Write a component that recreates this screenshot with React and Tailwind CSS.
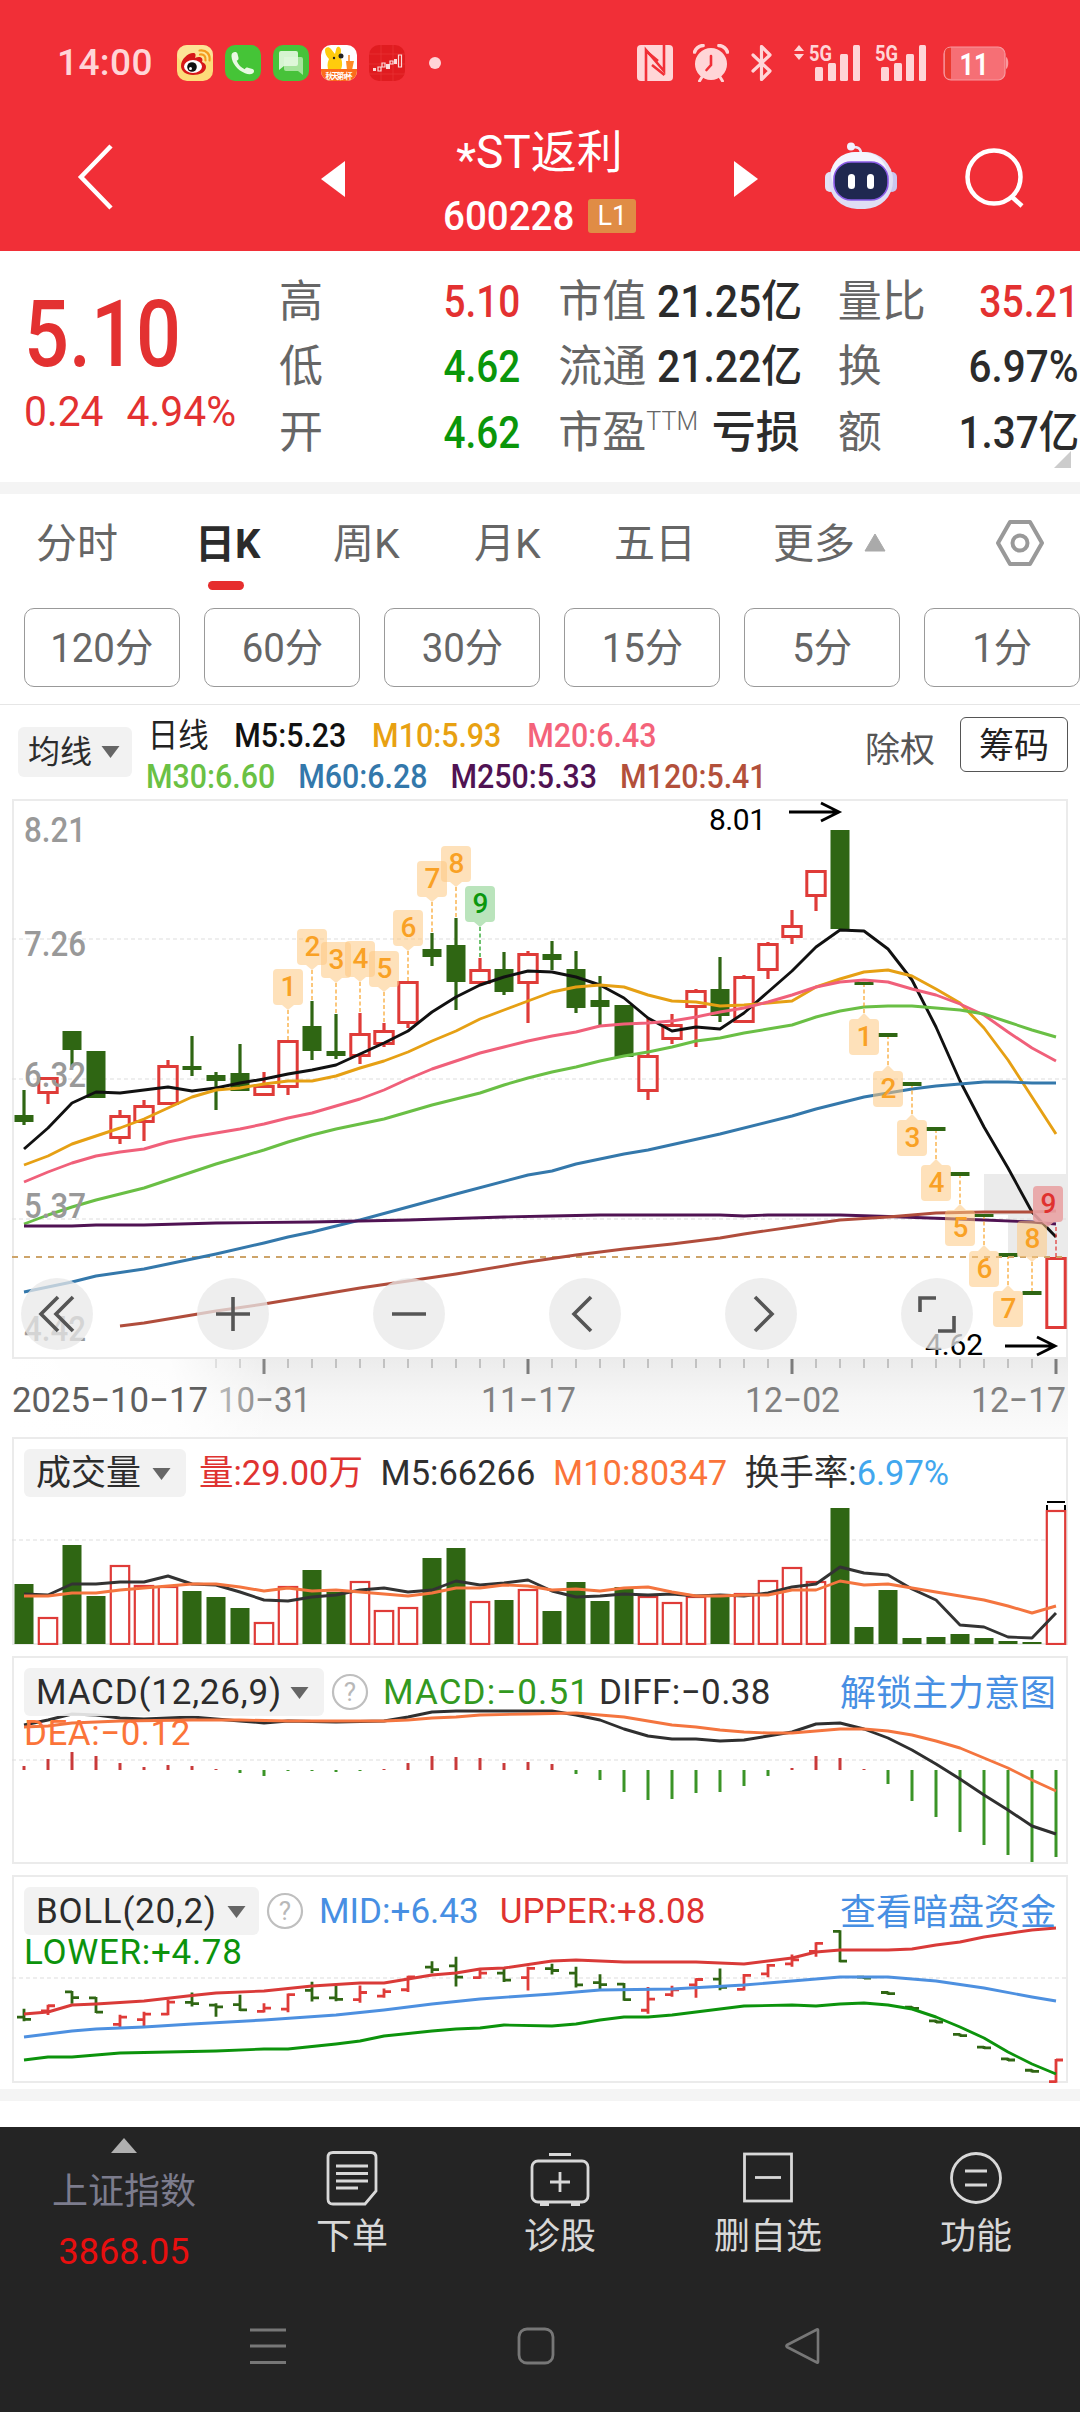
import React from 'react'

const GREEN = '#2f6613'
const RED = '#df3b38'

const xAt = (i) => 24 + i * 24

// [kind, high, body top, body bottom, low] in chart pixels, 24px per trading day
const CANDLES = [
    ['g', 1090, 1115, 1122, 1125], ['r', 1077, 1077, 1094, 1104], ['g', 1031, 1031, 1050, 1067], ['g', 1051, 1051, 1098, 1098],
    ['r', 1110, 1115, 1139, 1144], ['r', 1100, 1105, 1123, 1141], ['r', 1060, 1065, 1105, 1105], ['g', 1036, 1066, 1070, 1076],
    ['g', 1072, 1075, 1081, 1110], ['g', 1044, 1073, 1091, 1091], ['r', 1072, 1085, 1096, 1096], ['r', 1040, 1040, 1088, 1095],
    ['g', 1001, 1026, 1051, 1060], ['g', 1014, 1051, 1056, 1059], ['r', 1013, 1033, 1057, 1064], ['r', 1023, 1030, 1045, 1047],
    ['r', 981, 981, 1024, 1028], ['g', 933, 949, 957, 966], ['g', 918, 945, 982, 1010], ['r', 958, 969, 984, 984],
    ['g', 952, 969, 992, 995], ['r', 951, 953, 984, 1023], ['g', 941, 954, 960, 970], ['g', 951, 969, 1008, 1013],
    ['g', 976, 1000, 1007, 1025], ['g', 1005, 1005, 1057, 1057], ['r', 1018, 1055, 1092, 1100], ['r', 1014, 1024, 1040, 1044],
    ['r', 989, 990, 1008, 1047], ['g', 957, 989, 1016, 1022], ['r', 975, 976, 1023, 1023], ['r', 942, 943, 971, 979],
    ['r', 910, 925, 938, 944], ['r', 870, 870, 897, 911], ['g', 830, 830, 929, 929], ['g', 982, 982, 985, 985],
    ['g', 1033, 1033, 1037, 1037], ['g', 1082, 1082, 1086, 1086], ['g', 1127, 1127, 1131, 1131], ['g', 1172, 1172, 1176, 1176],
    ['g', 1214, 1214, 1217, 1217], ['g', 1253, 1253, 1257, 1257], ['g', 1291, 1291, 1295, 1295], ['r', 1257, 1257, 1329, 1329],
]

const M5 = [1149, 1128, 1103, 1092, 1093, 1090, 1087, 1091, 1088, 1083, 1079, 1074, 1070, 1065, 1054, 1043, 1031, 1012, 997, 985, 977, 971, 972, 977, 985, 998, 1018, 1031, 1027, 1029, 1013, 992, 971, 947, 930, 931, 949, 980, 1027, 1081, 1127, 1168, 1212, 1237]
const M10 = [1165, 1156, 1144, 1136, 1128, 1119, 1108, 1097, 1090, 1088, 1084, 1081, 1081, 1076, 1068, 1061, 1052, 1041, 1031, 1019, 1010, 1001, 992, 987, 985, 987, 995, 1001, 1002, 1006, 1005, 1003, 1001, 987, 979, 972, 970, 976, 989, 1003, 1028, 1060, 1097, 1134]
const M20 = [1182, 1172, 1163, 1156, 1152, 1149, 1142, 1137, 1133, 1129, 1124, 1118, 1113, 1106, 1099, 1090, 1079, 1069, 1061, 1053, 1047, 1041, 1036, 1032, 1026, 1024, 1023, 1021, 1017, 1012, 1008, 1002, 995, 987, 982, 980, 982, 989, 995, 1004, 1015, 1032, 1048, 1061]
const M30 = [1224, 1215, 1207, 1200, 1194, 1188, 1180, 1172, 1164, 1157, 1150, 1142, 1135, 1129, 1124, 1119, 1112, 1105, 1099, 1093, 1085, 1078, 1072, 1067, 1061, 1056, 1052, 1047, 1041, 1038, 1033, 1029, 1025, 1017, 1011, 1007, 1006, 1006, 1008, 1010, 1014, 1022, 1030, 1037]
// sparse lines keep [day, y] pairs
const M60 = [[0, 1292], [1, 1287], [2, 1282], [3, 1276], [5, 1269], [8, 1254], [10, 1243], [11, 1237], [12, 1232], [14, 1220], [18, 1194], [21, 1175], [22, 1171], [23, 1164], [25, 1154], [26, 1150], [29, 1134], [32, 1116], [33, 1109], [35, 1097], [36, 1093], [37, 1089], [38, 1086], [39, 1084], [40, 1082], [41, 1082], [42, 1083], [43, 1083]]
const M250 = [[0, 1226], [2, 1226], [3, 1225], [5, 1225], [8, 1223], [12, 1222], [16, 1220], [20, 1217], [22, 1216], [24, 1215], [29, 1215], [30, 1216], [31, 1215], [34, 1215], [36, 1216.5], [40, 1220], [42, 1222], [43, 1224]]
const M120 = [[4, 1326], [5, 1323], [8, 1311], [10, 1304], [14, 1288], [18, 1274], [21, 1262], [23, 1255], [25, 1249], [27, 1244], [29, 1238], [30, 1234], [32, 1227], [34, 1220], [36, 1217], [38, 1213], [40, 1212], [42, 1212], [43, 1211]]

// nine-turn markers: box top plus where the dotted stem meets the candle
const TAGS_UP = [
    [11, 969, 1040, 1], [12, 929, 1001, 2], [13, 942, 1014, 3], [14, 941, 1013, 4], [15, 951, 1023, 5],
    [16, 910, 981, 6], [17, 861, 933, 7], [18, 846, 918, 8], [19, 886, 958, 9], [42, 1221, 1291, 8], [43, 1186, 1257, 9],
]
const TAGS_DOWN = [[35, 1019, 985, 1], [36, 1071, 1037, 2], [37, 1120, 1086, 3], [38, 1165, 1131, 4], [39, 1210, 1176, 5], [40, 1251, 1217, 6], [41, 1291, 1257, 7]]

const VOLUME = [1584, 1617, 1545, 1596, 1565, 1585, 1586, 1591, 1597, 1608, 1622, 1586, 1570, 1592, 1581, 1610, 1607, 1558, 1548, 1601, 1600, 1589, 1611, 1582, 1601, 1587, 1596, 1602, 1596, 1597, 1593, 1580, 1567, 1581, 1508, 1627, 1590, 1638, 1637, 1634, 1638, 1641, 1642, 1510]
const VOL_M5 = [1594, 1595, 1584, 1584, 1582, 1582, 1576, 1584, 1585, 1592, 1600, 1601, 1597, 1595, 1590, 1588, 1592, 1590, 1581, 1585, 1583, 1580, 1591, 1597, 1596, 1594, 1595, 1594, 1596, 1595, 1596, 1593, 1587, 1584, 1567, 1573, 1575, 1589, 1600, 1625, 1627, 1637, 1638, 1613]
const VOL_M10 = [1596, 1596, 1593, 1593, 1590, 1588, 1586, 1584, 1584, 1587, 1591, 1588, 1591, 1590, 1592, 1594, 1596, 1593, 1588, 1588, 1585, 1586, 1590, 1589, 1591, 1588, 1587, 1592, 1596, 1596, 1595, 1595, 1590, 1590, 1581, 1585, 1584, 1588, 1592, 1596, 1600, 1606, 1613, 1606]

const MACD = [1766, 1759, 1752, 1756, 1763, 1767, 1765, 1766, 1769, 1773, 1776, 1771, 1771, 1772, 1771, 1769, 1763, 1756, 1757, 1758, 1763, 1762, 1764, 1774, 1780, 1792, 1800, 1799, 1793, 1792, 1786, 1776, 1768, 1756, 1758, 1769, 1784, 1801, 1817, 1832, 1845, 1855, 1862, 1857]
const DIFF = [[0, 1725], [1, 1720], [2, 1714], [3, 1715], [4, 1718], [5, 1719], [6, 1718], [7, 1717], [8, 1719], [9, 1721], [10, 1723], [11, 1721], [13, 1722], [15, 1721], [16, 1717], [17, 1712], [18, 1711], [22, 1711], [23, 1715], [24, 1720], [25, 1729], [26, 1736], [27, 1739], [28, 1739], [29, 1741], [30, 1740], [31, 1736], [32, 1732], [33, 1724], [34, 1723], [35, 1729], [36, 1738], [37, 1750], [38, 1764], [39, 1779], [40, 1795], [41, 1810], [42, 1826], [43, 1834]]
const DEA = [[0, 1727], [1, 1726], [2, 1723], [3, 1722], [4, 1721], [7, 1720], [9, 1720], [11, 1721], [15, 1721], [16, 1720], [17, 1718], [18, 1717], [19, 1715], [21, 1714], [23, 1713], [24, 1715], [25, 1717], [26, 1721], [27, 1725], [28, 1727], [29, 1730], [30, 1732], [31, 1733], [32, 1733], [33, 1731], [34, 1729], [35, 1729], [36, 1731], [37, 1735], [38, 1741], [39, 1748], [40, 1758], [41, 1768], [42, 1780], [43, 1791]]

const UPPER = [[0, 2014], [1, 2012], [2, 2005], [3, 2004], [5, 2001], [7, 1995.5], [8, 1993], [10, 1991], [12, 1986], [14, 1983], [15, 1983], [16, 1979], [17, 1975], [18, 1973], [19, 1969], [20, 1968], [22, 1961], [23, 1960], [24, 1961], [25, 1962], [28, 1962], [30, 1964], [32, 1958], [33, 1952], [34, 1950], [36, 1950], [37, 1949], [38, 1945], [39, 1942], [40, 1937], [42, 1930], [43, 1928]]
const MID = [[0, 2037], [1, 2034], [2, 2031], [3, 2029], [5, 2027], [7, 2024], [10, 2020], [13, 2015], [15, 2010], [17, 2004], [19, 1999], [22, 1994], [24, 1990], [27, 1989], [30, 1985], [32, 1981], [33, 1979], [34, 1977], [36, 1977], [38, 1981], [40, 1988], [42, 1997], [43, 2001]]
const LOWER = [[0, 2060], [1, 2057], [2, 2057], [3, 2055], [4, 2053], [8, 2051], [10, 2049], [11, 2049], [13, 2044], [14, 2041], [15, 2036], [17, 2031], [18, 2029], [19, 2028], [20, 2025], [22, 2026], [23, 2024], [24, 2020], [25, 2017], [26, 2017], [27, 2015], [29, 2009], [30, 2006], [32, 2005], [33, 2006], [34, 2004], [35, 2003], [36, 2005], [37, 2009], [38, 2017], [39, 2027], [40, 2038], [41, 2052], [42, 2064], [43, 2074]]

function Line({ data, color, width = 2.9 }) {
    const points = data
        .map((d, i) => (Array.isArray(d) ? `${xAt(d[0])},${d[1]}` : `${xAt(i)},${d}`))
        .join(' ')
    return <polyline points={points} fill="none" stroke={color} strokeWidth={width} strokeLinejoin="round" />
}

function Grid({ y }) {
    return <line x1="12" x2="1066" y1={y} y2={y} stroke="#dedede" strokeWidth="1.2" strokeDasharray="4 3" />
}

function Candle({ i, c }) {
    const [kind, high, top, bottom, low] = c
    const x = xAt(i)
    const color = kind === 'g' ? GREEN : RED
    return (
        <g>
            {high < top && <line x1={x} x2={x} y1={high} y2={top} stroke={color} strokeWidth="3.2" />}
            {low > bottom && <line x1={x} x2={x} y1={bottom} y2={low} stroke={color} strokeWidth="3.2" />}
            {kind === 'g' ? (
                <rect x={x - 9.5} y={top} width="19" height={bottom - top} fill={color} />
            ) : (
                <rect x={x - 9.2} y={top + 1.5} width="18.4" height={bottom - top - 3} fill="none" stroke={color} strokeWidth="3" />
            )}
        </g>
    )
}

function tagColors(i) {
    if (i === 19) return { bg: '#b3e1b5', fg: '#0b970e' }
    if (i === 43) return { bg: '#e9a3a4', fg: '#e0312f' }
    return { bg: '#fdc981', fg: '#f9a125' }
}

function Tag({ i, top, stem, n, down }) {
    const stemX = xAt(i)
    // the last marker is pushed left so that it stays inside the frame
    const x = Math.min(stemX, 1048)
    const { bg, fg } = tagColors(i)
    const tip = down ? top - 6 : top + 41
    return (
        <g>
            <line x1={stemX} x2={stemX} y1={tip} y2={stem} stroke={fg} strokeOpacity="0.6" strokeWidth="2" strokeDasharray="4 2.5" />
            <g fill={bg} fillOpacity={i === 19 || i === 43 ? 0.9 : 0.55}>
                <path d={down
                    ? `M${x - 11} ${top}h5l6-6 6 6h5a4 4 0 0 1 4 4v28a4 4 0 0 1-4 4h-22a4 4 0 0 1-4-4v-28a4 4 0 0 1 4-4z`
                    : `M${x - 11} ${top}h22a4 4 0 0 1 4 4v28a4 4 0 0 1-4 4h-5l-6 5-6-5h-5a4 4 0 0 1-4-4v-28a4 4 0 0 1 4-4z`} />
            </g>
            <text x={x + 0.5} y={top + 27} textAnchor="middle" fontSize="28" fontWeight="500" fill={fg}>{n}</text>
        </g>
    )
}

function Arrow({ x, y }) {
    return <path d={`M${x} ${y}h50m-18-9l18 9-18 9`} fill="none" stroke="#000" strokeWidth="2.8" />
}

function Caret({ className = 'text-[#666]' }) {
    return (
        <svg className={className} width="19" height="12" viewBox="0 0 19 12">
            <path d="M0.5 0h18L9.5 12z" fill="currentColor" />
        </svg>
    )
}

function Pill({ children, className }) {
    return (
        <div className={`flex shrink-0 items-center justify-between rounded-md bg-[#f1f1f1]/90 text-[#2c2c2c] ${className}`}>
            {children}
            <Caret />
        </div>
    )
}

function Help() {
    return (
        <svg width="38" height="38" viewBox="0 0 38 38" className="ml-[7px] shrink-0">
            <circle cx="19" cy="19" r="17" fill="#fff" stroke="#bfbfbf" strokeWidth="2.2" />
            <text x="19" y="28" textAnchor="middle" fontSize="26" fill="#b8b8b8">?</text>
        </svg>
    )
}

function SignalBars({ arrows }) {
    return (
        <svg className="overflow-visible" width="66" height="40" viewBox="0 0 66 40" fill="#ffd5d7">
            {arrows && <path d="M0 8l5-6 5 6zM0 11h10l-5 6z" />}
            <text x="15" y="17.500" fontSize="22.500" fontWeight="700" textLength="23" lengthAdjust="spacingAndGlyphs">5G</text>
            <rect x="21" y="24" width="8" height="14" rx="1.500" />
            <rect x="34" y="20" width="8" height="18" rx="1.500" />
            <rect x="46" y="11" width="8" height="27" rx="1.500" />
            <rect x="59" y="2" width="7" height="36" rx="1.500" />
        </svg>
    )
}

function StatusBar() {
    return (
        <div className="flex h-[126px] items-center pl-[57px]">
            <span className="w-[120px] text-[37px] font-medium tracking-[0.4px] text-[#ffd5d7]">14:00</span>
            <div className="flex gap-3">
                <svg width="36" height="36" viewBox="0 0 36 36">
                    <rect width="36" height="36" rx="10" fill="#fddb7a" />
                    <rect width="36" height="18" rx="10" fill="#fde9a8" opacity="0.6" />
                    <path d="M4 21C4 14 11 8 16 8c3 0 3 2 2 5 4-2 9-1 7 4 3 1 4 3 4 5 0 5-6 8-13 8S4 26 4 21z" fill="#d71718" />
                    <ellipse cx="16" cy="21.500" rx="9" ry="6.500" fill="#fff" />
                    <circle cx="15" cy="22" r="4.800" fill="#111" />
                    <circle cx="13.500" cy="23.500" r="1.500" fill="#fff" />
                    <path d="M23 9.500c4-.5 6 2 5.500 6M22.500 5.500c7-1 11 4 10 10" fill="none" stroke="#f49b1d" strokeWidth="2.200" strokeLinecap="round" />
                </svg>
                <svg width="36" height="36" viewBox="0 0 36 36">
                    <rect width="36" height="36" rx="10" fill="#45c437" />
                    <path d="M7.500 8c2-1.600 4.500-1 5 .8l1 4c.3 1.500-.5 2.500-1.800 3 1.500 4 4.500 7 8 8.500.8-1.500 2-2 3.300-1.600l4.500 1.200c2 .6 2 3 .5 4.300-2 1.500-5 1.200-8 0C12 25 7 18 6.500 11.500c0-1.500 0-2.700 1-3.500z" fill="#e8f9e2" />
                </svg>
                <svg width="36" height="36" viewBox="0 0 36 36">
                    <rect width="36" height="36" rx="10" fill="#47c23a" />
                    <path d="M11 12h17q2 0 2 2v16l-5-4H13q-2 0-2-2z" fill="#a5e49b" />
                    <path d="M8 6h15q2 0 2 2v11q0 2-2 2H11l-5 4V8q0-2 2-2z" fill="#e3f8de" opacity="0.92" />
                </svg>
                <svg width="36" height="36" viewBox="0 0 36 36">
                    <defs><clipPath id="app"><rect width="36" height="36" rx="10" /></clipPath></defs>
                    <g clipPath="url(#app)">
                        <rect width="36" height="36" fill="#fff" />
                        <path d="M4 5c0-3 4-4 6-1l4 5c1-3 1-8 4-7s2 6 1 10c3 3 3 12-1 15H8c-2-5-2-9 0-13C5 11 4 8 4 5z" fill="#ffcb0d" />
                        <circle cx="20" cy="11" r="2.500" fill="#222" />
                        <circle cx="13" cy="13" r="1.200" fill="#222" />
                        <path d="M25 16h8l-2 9h-5z" fill="#ff8a24" />
                        <path d="M28 10v6" stroke="#ff8a24" strokeWidth="1.500" />
                        <rect y="24" width="36" height="12" fill="#fb6d1b" />
                        <text x="18" y="33.500" textAnchor="middle" fontSize="7.500" fontWeight="700" fill="#fff" textLength="27">秋天第1杯</text>
                    </g>
                </svg>
                <svg width="36" height="36" viewBox="0 0 36 36">
                    <rect width="36" height="36" rx="10" fill="#e01c20" />
                    <path d="M0 9h36M0 19h36M0 29h36M12 0v36M24 0v36" stroke="#e83438" strokeWidth="0.700" />
                    <g fill="#fbdcdc"><rect x="4" y="23" width="3" height="3" /><rect x="17" y="19" width="4" height="5" /><rect x="25" y="14" width="3" height="5" /></g>
                    <path d="M9 22h3v4H9zM13 18h3v4h-3zM21 16h3v3h-3zM29.500 10h3v12h-3z" fill="none" stroke="#fbdcdc" strokeWidth="1.200" />
                </svg>
            </div>
            <div className="ml-6 size-3 rounded-full bg-[#ffd5d7]" />
            <div className="ml-auto flex items-center pr-[71px]">
                <svg width="36" height="36" viewBox="0 0 36 36">
                    <rect width="36" height="36" rx="4" fill="#ffd5d7" />
                    <path d="M9 36V5l18 21V0" fill="none" stroke="#f12f37" strokeWidth="2.600" />
                    <path d="M9 6l12 10M27.500 30L15 20" fill="none" stroke="#f12f37" strokeWidth="2.600" />
                </svg>
                <svg className="ml-5" width="36" height="38" viewBox="0 0 36 38">
                    <circle cx="18" cy="20" r="16" fill="#ffd5d7" />
                    <path d="M1.500 8C3 4 6 2 10 1.500M34.500 8C33 4 30 2 26 1.500" stroke="#ffd5d7" strokeWidth="3.600" fill="none" strokeLinecap="round" />
                    <path d="M9 33l-2.500 4M27 33l2.500 4" stroke="#ffd5d7" strokeWidth="3" strokeLinecap="round" />
                    <path d="M18 12v9l-4.500 5" fill="none" stroke="#f12f37" strokeWidth="2.600" strokeLinecap="round" />
                </svg>
                <svg className="ml-[22px]" width="22" height="36" viewBox="0 0 22 36">
                    <path d="M2 10l17 16-8.500 8.500v-33L19 10 2 26" fill="none" stroke="#ffd5d7" strokeWidth="3.200" strokeLinecap="round" strokeLinejoin="round" />
                </svg>
                <div className="ml-[21px]"><SignalBars arrows /></div>
                <SignalBars />
                <svg className="ml-[17px] overflow-visible" width="66" height="36" viewBox="0 0 66 36">
                    <path d="M63 12c3 1 3 11 0 12z" fill="#f99a9e" />
                    <rect x="1" y="2" width="61" height="33" rx="7" fill="#f66f75" stroke="#f79aa0" strokeWidth="1.200" />
                    <path d="M8 2.800h-1q-5 0-5 5v21q0 5 5 5h1z" fill="#ea3a30" />
                    <text x="31" y="29.500" textAnchor="middle" fontSize="31" fontWeight="700" fill="#fff" textLength="29" lengthAdjust="spacingAndGlyphs">11</text>
                </svg>
            </div>
        </div>
    )
}

function Robot() {
    return (
        <svg width="74" height="68" viewBox="0 0 74 68">
            <path d="M37 12c0-6-3-7-9-7" fill="none" stroke="#e9e6fa" strokeWidth="2.600" />
            <circle cx="27" cy="4.500" r="4" fill="#f3f1ff" />
            <rect x="1" y="30" width="10" height="20" rx="5" fill="#e3e2f5" />
            <rect x="63" y="30" width="10" height="20" rx="5" fill="#c9c6ee" />
            <rect x="5" y="10" width="64" height="57" rx="28" fill="#dfdef4" />
            <rect x="7" y="10" width="56" height="44" rx="24" fill="#f5f4fe" />
            <rect x="10" y="20" width="54" height="38" rx="17" fill="#1f2850" stroke="#8b5be6" strokeWidth="1.600" />
            <rect x="24" y="32" width="7" height="15" rx="3.500" fill="#fff" />
            <rect x="43" y="32" width="7" height="15" rx="3.500" fill="#fff" />
        </svg>
    )
}

function TitleBar() {
    return (
        <div className="flex h-[125px] items-start">
            <svg className="ml-[75px] mt-[17px]" width="40" height="68" viewBox="0 0 40 68">
                <path d="M36 3L6 34l30 31" fill="none" stroke="#fff" strokeWidth="4.500" />
            </svg>
            <svg className="ml-[206px] mt-[35px]" width="24" height="36" viewBox="0 0 24 36"><path d="M24 0v36L0 18z" fill="#fff" /></svg>
            <div className="mx-auto flex flex-col items-center text-white">
                <div className="flex text-[46px] leading-[52px]"><span className="relative top-[8px]">*</span>ST返利</div>
                <div className="mt-[14px] flex items-center gap-[14px]">
                    <span className="-mr-2 origin-left scale-x-[0.94] text-[41px] font-medium leading-[48px]">600228</span>
                    <span className="flex h-[34px] w-[48px] items-center justify-center rounded-[3px] bg-[#e08c45] text-[27px]">L1</span>
                </div>
            </div>
            <svg className="mr-[66px] mt-[35px]" width="24" height="36" viewBox="0 0 24 36"><path d="M0 0v36l24-18z" fill="#fff" /></svg>
            <div className="mt-[16px]"><Robot /></div>
            <svg className="ml-[64px] mr-[54px] mt-[20px]" width="64" height="64" viewBox="0 0 64 64" fill="none" stroke="#fff" strokeWidth="4.500">
                <circle cx="32" cy="31" r="26.500" />
                <path d="M49 50l11 10" />
            </svg>
        </div>
    )
}

function Stat({ label, sup, value, color = 'text-[#2b2b2b]', fit = 'scale-x-[0.9]' }) {
    return (
        <div className="flex h-[65.500px] items-center justify-between">
            <span className="flex whitespace-nowrap text-[#666]">
                {label}
                {sup && <sup className="top-0 text-[25px] font-light leading-[44px]">{sup}</sup>}
            </span>
            <span className={`origin-right whitespace-nowrap font-medium ${fit} ${color}`}>{value}</span>
        </div>
    )
}

function Quote() {
    return (
        <section className="relative flex h-[231px]">
            <div className="w-[279px] pl-[24px] text-[#e33131]">
                <div className="mt-[36px] origin-left scale-x-[0.86] text-[92px] font-medium leading-[96px]">5.10</div>
                <div className="mt-[4px] flex origin-left scale-x-[0.96] gap-[24px] text-[42.500px] leading-[50px]">
                    <span>0.24</span>
                    <span>4.94%</span>
                </div>
            </div>
            <div className="mt-[18px] grid w-[800px] grid-cols-3 gap-x-[38px] text-[44px]">
                <div>
                    <Stat label="高" value="5.10" color="text-[#e33131]" fit="scale-x-[0.88]" />
                    <Stat label="低" value="4.62" color="text-[#0a960a]" fit="scale-x-[0.88]" />
                    <Stat label="开" value="4.62" color="text-[#0a960a]" fit="scale-x-[0.88]" />
                </div>
                <div>
                    <Stat label="市值" value="21.25亿" fit="scale-x-[0.93]" />
                    <Stat label="流通" value="21.22亿" fit="scale-x-[0.93]" />
                    <Stat label="市盈" sup="TTM" value="亏损" fit="scale-x-100" />
                </div>
                <div>
                    <Stat label="量比" value="35.21" color="text-[#e33131]" fit="scale-x-[0.89]" />
                    <Stat label="换" value="6.97%" fit="scale-x-[0.92]" />
                    <Stat label="额" value="1.37亿" fit="scale-x-[0.92]" />
                </div>
            </div>
            <svg className="absolute right-[9px] top-[200px]" width="17" height="17" viewBox="0 0 17 17"><path d="M17 0v17H0z" fill="#ccc" /></svg>
        </section>
    )
}

function Tabs() {
    return (
        <nav className="flex h-[114px] pl-[36px] pt-[25px] text-[41px] leading-[50px] text-[#666]">
            <span className="w-[159px]">分时</span>
            <span className="w-[138px]">
                <span className="inline-flex flex-col items-center text-[40px] font-bold text-[#2b2b2b]">
                    日K
                    <i className="mr-[3px] mt-[11px] h-[9px] w-[36px] rounded-full bg-[#e62e2e]" />
                </span>
            </span>
            <span className="w-[141px]">周K</span>
            <span className="w-[140px]">月K</span>
            <span className="w-[159px]">五日</span>
            <span className="flex w-[222px] items-center gap-[9px] self-start">
                更多
                <svg className="-mt-1" width="22" height="19" viewBox="0 0 22 19"><path d="M11 1L21 18H1z" fill="#aaa" stroke="#aaa" strokeLinejoin="round" /></svg>
            </span>
            <svg className="-mt-px" width="50" height="50" viewBox="0 0 50 50" fill="none" stroke="#999" strokeWidth="4" strokeLinejoin="round">
                <path d="M15 4h20l12 21-12 21H15L3 25z" />
                <circle cx="25" cy="25" r="7.500" />
            </svg>
        </nav>
    )
}

function Periods() {
    return (
        <div className="flex h-[97px] gap-6 overflow-hidden border-b border-[#e6e6e6] pl-6">
            {['120分', '60分', '30分', '15分', '5分', '1分'].map((p) => (
                <div key={p} className="flex h-[79px] w-[156px] shrink-0 items-center justify-center rounded-[10px] border-[1.5px] border-[#999] pt-[3px] text-[40px] text-[#666]">
                    <span className="scale-x-[0.96]">{p}</span>
                </div>
            ))}
        </div>
    )
}

function AverageLegend() {
    return (
        <div className="flex h-[94px] text-[33px] font-medium">
            <Pill className="ml-[18px] mt-[22px] h-[50px] w-[114px] pl-[10px] pr-[12px] text-[32px] font-normal">均线</Pill>
            <div className="ml-[14px] mt-[10px] w-[700px] whitespace-nowrap leading-[41px]">
                <div className="flex origin-left scale-x-[0.92] gap-[28px]">
                    <span className="pl-[2px] text-[33px] font-normal text-[#222]">日线</span>
                    <span className="text-[#111]">M5:5.23</span>
                    <span className="text-[#e8a112]">M10:5.93</span>
                    <span className="text-[#f4637a]">M20:6.43</span>
                </div>
                <div className="flex origin-left scale-x-[0.92] gap-[25px]">
                    <span className="text-[#6ac144]">M30:6.60</span>
                    <span className="text-[#3378ab]">M60:6.28</span>
                    <span className="text-[#501353]">M250:5.33</span>
                    <span className="text-[#b3503b]">M120:5.41</span>
                </div>
            </div>
            <div className="ml-auto mr-[12px] flex items-start text-[35px] font-normal">
                <span className="mr-[25px] mt-[21px] leading-[50px] text-[#555]">除权</span>
                <span className="mt-[12px] flex h-[55px] w-[108px] items-center justify-center rounded-md border-[1.5px] border-[#555] pt-[6px] text-[#222]">筹码</span>
            </div>
        </div>
    )
}

const TOOL_ICONS = [
    'M37 19L20 36l17 17M52 19L35 36l17 17',
    'M36 19v34M19 36h34',
    'M19 36h34',
    'M42 19L25 36l17 17',
    'M30 19l17 17-17 17',
    'M19 34V20h16M37 53h16V38',
]

function PriceChart() {
    return (
        <section className="relative mx-3 h-[560px] border-2 border-[#ebebeb]">
            <svg className="absolute -left-0.5 -top-0.5 overflow-visible" width="1056" height="560" viewBox="12 799 1056 560">
                <path d="M984 1174h82v83h-58v-42h-24z" fill="#ebebeb" />
                <Grid y={939} />
                <Grid y={1079} />
                <Grid y={1219} />
                {CANDLES.map((c, i) => <Candle key={i} i={i} c={c} />)}
                <line x1="12" x2="1066" y1="1257" y2="1257" stroke="#cda469" strokeWidth="1.800" strokeDasharray="6 6" />
                <Line data={M5} color="#111" />
                <Line data={M10} color="#e6a014" />
                <Line data={M20} color="#f0607a" />
                <Line data={M30} color="#6abf45" />
                <Line data={M60} color="#3478ab" />
                <Line data={M250} color="#501353" />
                <Line data={M120} color="#b04d3c" />
                {TAGS_UP.map(([i, top, stem, n]) => <Tag key={i} i={i} top={top} stem={stem} n={n} />)}
                {TAGS_DOWN.map(([i, top, stem, n]) => <Tag key={i} i={i} top={top} stem={stem} n={n} down />)}
                <g fontSize="35" fill="#999" fontWeight="500">
                    <text x="24" y="842" textLength="62" lengthAdjust="spacingAndGlyphs">8.21</text>
                    <text x="24" y="956" textLength="62" lengthAdjust="spacingAndGlyphs">7.26</text>
                    <text x="24" y="1087" textLength="62" lengthAdjust="spacingAndGlyphs">6.32</text>
                    <text x="24" y="1218" textLength="62" lengthAdjust="spacingAndGlyphs">5.37</text>
                    <text x="24" y="1341" textLength="62" lengthAdjust="spacingAndGlyphs">4.42</text>
                </g>
                <g fontSize="30" fill="#000">
                    <text x="709" y="830" textLength="57">8.01</text>
                    <text x="925" y="1355" textLength="58">4.62</text>
                </g>
                <Arrow x={789} y={812} />
                <Arrow x={1005} y={1346} />
            </svg>
            <div className="absolute left-[7px] top-[477px] flex gap-[104px]">
                {TOOL_ICONS.map((d) => (
                    <svg key={d} className="size-[72px] rounded-full bg-[#e8e8e8]/75" viewBox="0 0 72 72">
                        <path d={d} fill="none" stroke="#555" strokeWidth="3.600" />
                    </svg>
                ))}
            </div>
        </section>
    )
}

function TimeAxis() {
    return (
        <div className="mx-3 h-[78px] bg-linear-to-b from-[#ececec] via-[#f6f6f6] to-[#fbfbfb]">
            <svg width="1056" height="78" viewBox="12 1359 1056 78">
                <defs>
                    <linearGradient id="fade">
                        <stop offset="0" stopColor="#fff" />
                        <stop offset="0.600" stopColor="#fff" stopOpacity="0.900" />
                        <stop offset="1" stopColor="#fff" stopOpacity="0" />
                    </linearGradient>
                </defs>
                {CANDLES.map((_, i) => {
                    if (i < 8) return null
                    const major = i % 11 === 10
                    return <line key={i} x1={xAt(i)} x2={xAt(i)} y1="1359" y2={major ? 1374 : 1368} stroke={major ? '#7c7c7c' : '#a5a5a5'} strokeWidth={major ? 3 : 1.2} />
                })}
                <g fontSize="35" fill="#818181">
                    <text x="218" y="1412" textLength="93" lengthAdjust="spacingAndGlyphs">10−31</text>
                    <text x="481" y="1412" textLength="95" lengthAdjust="spacingAndGlyphs">11−17</text>
                    <text x="745" y="1412" textLength="95" lengthAdjust="spacingAndGlyphs">12−02</text>
                    <text x="971" y="1412" textLength="95" lengthAdjust="spacingAndGlyphs">12−17</text>
                </g>
                <rect x="12" y="1359" width="260" height="78" fill="url(#fade)" />
                <text x="12" y="1412" fontSize="35" fill="#5f5f5f" textLength="196" lengthAdjust="spacingAndGlyphs">2025−10−17</text>
            </svg>
        </div>
    )
}

function VolumeChart() {
    return (
        <section className="relative mx-3 h-[208px] border-2 border-[#ebebeb]">
            <svg className="absolute -left-0.5 -top-0.5" width="1056" height="208" viewBox="12 1437 1056 208">
                <Grid y={1540} />
                {VOLUME.map((top, i) =>
                    CANDLES[i][0] === 'g' ? (
                        <rect key={i} x={xAt(i) - 9.5} y={top} width="19" height={1644 - top} fill={GREEN} />
                    ) : (
                        <rect key={i} x={xAt(i) - 9.2} y={top + 1} width="18.400" height={1643 - top} fill="#fff" stroke={RED} strokeWidth="2.200" />
                    )
                )}
                <path d="M1047 1510v-5M1065 1510v-5M1047 1502h18" fill="none" stroke="#000" strokeWidth="2" />
                <Line data={VOL_M5} color="#333" />
                <Line data={VOL_M10} color="#f4753f" />
            </svg>
            <div className="relative ml-[10px] mt-[10px] flex h-[48px] items-center whitespace-nowrap text-[35px] text-[#2f2f2f]">
                <Pill className="h-[48px] w-[162px] pl-[12px] pr-[15px] pt-[2px]">成交量</Pill>
                <div className="ml-[13px] mt-[3px] flex origin-left scale-x-[0.985] gap-[18px]">
                    <span className="text-[#df3331]">量:29.00万</span>
                    <span>M5:66266</span>
                    <span className="text-[#fb7439]">M10:80347</span>
                    <span>换手率:<span className="text-[#41a7ee]">6.97%</span></span>
                </div>
            </div>
        </section>
    )
}

function MacdChart() {
    return (
        <section className="relative mx-3 mt-[11px] h-[208px] border-2 border-[#ebebeb]">
            <svg className="absolute -left-0.5 -top-0.5" width="1056" height="208" viewBox="12 1656 1056 208">
                <Grid y={1760} />
                {MACD.map((y, i) => (
                    <line key={i} x1={xAt(i)} x2={xAt(i)} y1="1770" y2={y} stroke={y < 1770 ? '#c93a3a' : '#3b9427'} strokeWidth="3" />
                ))}
                <Line data={DIFF} color="#2f2f2f" />
                <Line data={DEA} color="#f4753f" />
            </svg>
            <div className="relative ml-[10px] mr-[10px] mt-[10px] flex h-[48px] items-center whitespace-nowrap text-[35px] text-[#2f2f2f]">
                <Pill className="h-[48px] w-[300px] pl-[12px] pr-[15px] pt-[2px] tracking-[0.8px]">MACD(12,26,9)</Pill>
                <Help />
                <div className="ml-[14px] mt-[3px] flex gap-[9px] tracking-[1.1px]">
                    <span className="text-[#33991f]">MACD:−0.51</span>
                    <span className="tracking-[0.4px]">DIFF:−0.38</span>
                </div>
                <span className="ml-auto mt-[3px] text-[36px] text-[#478fe3]">解锁主力意图</span>
            </div>
            <div className="relative ml-[10px] mt-px text-[35px] leading-[34px] tracking-[0.5px] text-[#fb7439]">DEA:−0.12</div>
        </section>
    )
}

function BollChart() {
    const scale = (y) => 1931.3 + (y - 830) * 0.3014
    return (
        <section className="relative mx-3 mt-[11px] h-[208px] border-2 border-[#ebebeb]">
            <svg className="absolute -left-0.5 -top-0.5" width="1056" height="208" viewBox="12 1875 1056 208">
                <Grid y={1978} />
                {CANDLES.map(([kind, high, top, bottom, low], i) => {
                    const x = xAt(i)
                    const open = scale(kind === 'g' ? top : bottom)
                    const close = scale(kind === 'g' ? bottom : top)
                    return <path key={i} d={`M${x} ${scale(high) - 1}V${scale(low) + 1}M${x - 7} ${open}h7M${x} ${close}h7`} stroke={kind === 'g' ? GREEN : RED} strokeWidth="2.800" />
                })}
                <Line data={UPPER} color="#d93a38" />
                <Line data={MID} color="#4d90e0" />
                <Line data={LOWER} color="#0c930c" />
            </svg>
            <div className="relative ml-[10px] mr-[10px] mt-[10px] flex h-[48px] items-center whitespace-nowrap text-[35px] text-[#2f2f2f]">
                <Pill className="h-[48px] w-[235px] pl-[12px] pr-[13px] pt-[2px] tracking-[0.7px]">BOLL(20,2)</Pill>
                <Help />
                <div className="ml-[15px] mt-[3px] flex gap-[21px]">
                    <span className="text-[#478fe3]">MID:+6.43</span>
                    <span className="tracking-[0.1px] text-[#df3331]">UPPER:+8.08</span>
                </div>
                <span className="ml-auto mt-[3px] text-[36px] text-[#478fe3]">查看暗盘资金</span>
            </div>
            <div className="relative ml-[10px] mt-px text-[35px] leading-[34px] tracking-[0.7px] text-[#0c930c]">LOWER:+4.78</div>
        </section>
    )
}

function Action({ label, children }) {
    return (
        <div className="flex flex-1 flex-col items-center pt-[22px] text-[36px] leading-[50px] text-[#d8d8d8]">
            <svg width="60" height="58" viewBox="0 0 60 58" fill="none" stroke="#d8d8d8" strokeWidth="2.800">{children}</svg>
            <span className="mt-[5px]">{label}</span>
        </div>
    )
}

function BottomBar() {
    return (
        <footer className="h-[285px] bg-[#242424]">
            <div className="flex h-[170px]">
                <div className="flex w-[248px] flex-col items-center pt-[11px] text-[36px]">
                    <svg width="26" height="15" viewBox="0 0 26 15"><path d="M13 0l13 15H0z" fill="#b0b0b0" /></svg>
                    <span className="mt-[14px] leading-[50px] text-[#7c7c8d]">上证指数</span>
                    <span className="mt-[10px] leading-[50px] text-[#e80f0f]">3868.05</span>
                </div>
                <Action label="下单">
                    <path d="M11 3.500h38q5 0 5 5V42L43 55H11q-5 0-5-5V8.500q0-5 5-5z" />
                    <path d="M14 17h32M14 24.500h32M14 32h32M14 39h22" />
                </Action>
                <Action label="诊股">
                    <rect x="2" y="12" width="56" height="41" rx="6" />
                    <path d="M19 5.500h22M30 23v20M20 33h20M10 55.500h9M41 55.500h9" />
                </Action>
                <Action label="删自选">
                    <rect x="6.500" y="5" width="47" height="47" />
                    <path d="M17 28.500h26" />
                </Action>
                <Action label="功能">
                    <circle cx="30" cy="29" r="24.500" />
                    <path d="M19 22h22M19 36h22" />
                </Action>
            </div>
            <div className="flex pl-[249px] pt-[30px]">
                <svg width="38" height="38" viewBox="0 0 38 38" stroke="#777" strokeWidth="3"><path d="M1 3h36M1 19h36M1 35.500h36" /></svg>
                <svg className="ml-[230px]" width="38" height="38" viewBox="0 0 38 38" fill="none" stroke="#777" strokeWidth="2.800"><rect x="2" y="2" width="34" height="34" rx="8" /></svg>
                <svg className="ml-[229px]" width="38" height="38" viewBox="0 0 38 38" fill="none" stroke="#777" strokeWidth="2.600" strokeLinejoin="round"><path d="M34 3v32q0 1-1 .5L3 20q-1-1 0-2L33 2.500q1-.5 1 .5z" /></svg>
            </div>
        </footer>
    )
}

export default function App() {
    return (
        <div className="h-[2412px] w-[1080px] overflow-hidden bg-white font-[Roboto,'Noto_Sans_CJK_SC',sans-serif]">
            <header className="h-[251px] bg-[#f12f37]">
                <StatusBar />
                <TitleBar />
            </header>
            <Quote />
            <div className="h-[12px] bg-[#f4f4f4]" />
            <Tabs />
            <Periods />
            <AverageLegend />
            <PriceChart />
            <TimeAxis />
            <VolumeChart />
            <MacdChart />
            <BollChart />
            <div className="mt-[6px] h-[12px] bg-[#f4f4f4]" />
            <div className="h-[26px]" />
            <BottomBar />
        </div>
    )
}
